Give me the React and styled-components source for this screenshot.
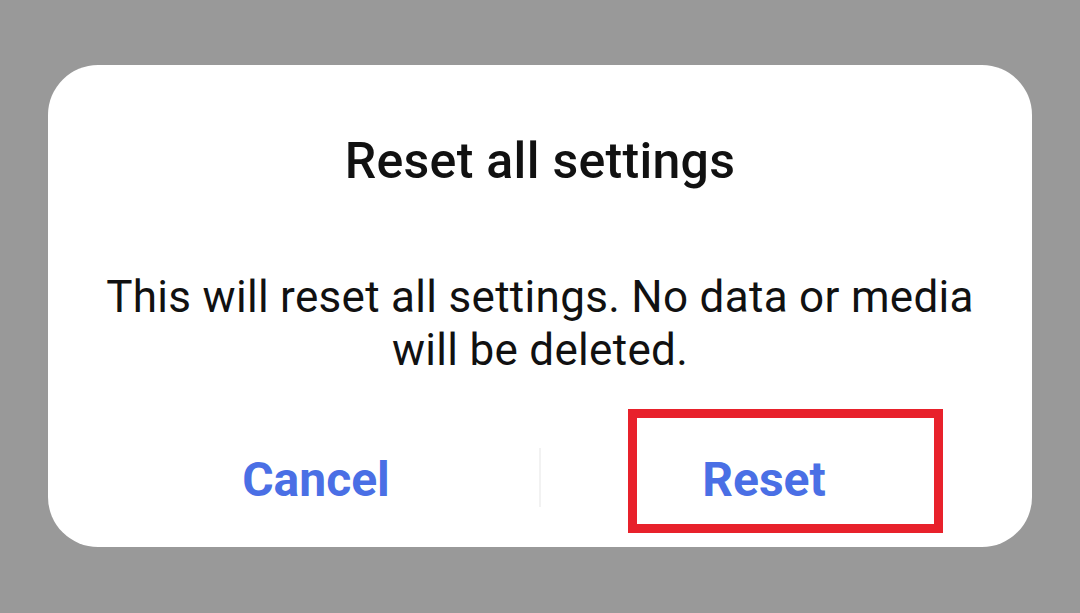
import React from "react";
import styled, { createGlobalStyle } from "styled-components";

const Global = createGlobalStyle`
  html, body { margin: 0; padding: 0; }
  body { background: #999999; font-family: Roboto, "Noto Sans", sans-serif; }
`;

const Screen = styled.div`
  width: 1080px;
  height: 613px;
  background: #999999;
  padding: 65px 48px 0;
  box-sizing: border-box;
`;

const Card = styled.div`
  position: relative;
  width: 984px;
  height: 482px;
  background: #ffffff;
  border-radius: 50px;
  display: flex;
  flex-direction: column;
  align-items: center;
  box-sizing: border-box;
  padding-top: 67px;
`;

const Title = styled.h2`
  margin: 0;
  font-family: Roboto, sans-serif;
  font-weight: 500;
  font-size: 50px;
  line-height: 58px;
  letter-spacing: 0.3px;
  color: #111111;
`;

const Message = styled.p`
  margin: 81px 0 0;
  font-family: Roboto, sans-serif;
  font-weight: 400;
  font-size: 44px;
  line-height: 53px;
  letter-spacing: 0.3px;
  color: #111111;
  text-align: center;
  width: 880px;
`;

const Actions = styled.div`
  margin-top: 73px;
  width: 100%;
  padding: 0 45px;
  box-sizing: border-box;
  display: flex;
  align-items: center;
`;

const Action = styled.button`
  flex: 1;
  border: none;
  background: none;
  padding: 0;
  font-family: Roboto, sans-serif;
  font-weight: 700;
  font-size: 48px;
  line-height: 60px;
  color: #4a6fe5;
  text-align: center;
`;

const Divider = styled.div`
  width: 2px;
  height: 59px;
  margin-top: -6px;
  background: #f2f2f2;
`;

const Highlight = styled.div`
  position: absolute;
  left: 580px;
  top: 344px;
  width: 315px;
  height: 124px;
  border: 9px solid #e8212b;
  box-sizing: border-box;
  pointer-events: none;
`;

export default function App() {
  return (
    <>
      <Global />
      <Screen>
        <Card>
          <Title>Reset all settings</Title>
          <Message>
            This will reset all settings. No data or media will be deleted.
          </Message>
          <Actions>
            <Action>Cancel</Action>
            <Divider />
            <Action>Reset</Action>
          </Actions>
          <Highlight />
        </Card>
      </Screen>
    </>
  );
}
